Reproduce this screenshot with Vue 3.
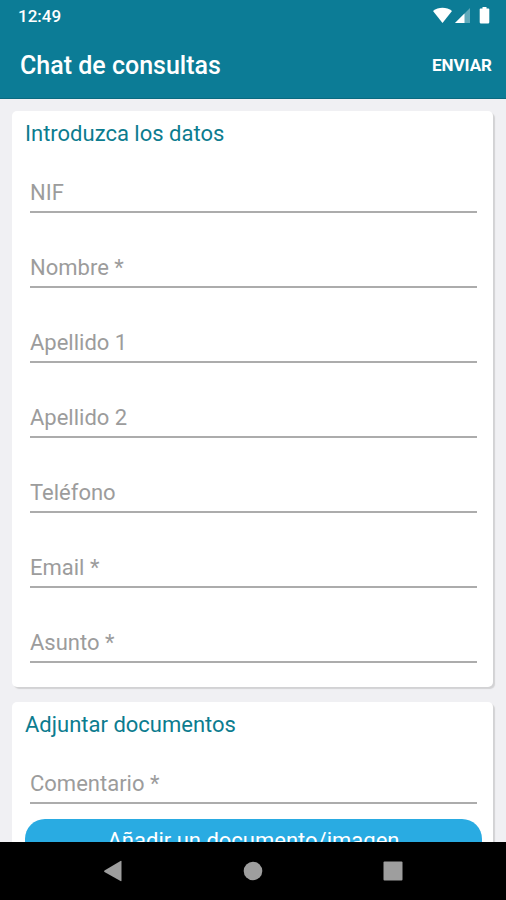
<script setup>
import { reactive } from 'vue'

const fields = [
  { id: 'nif', label: 'NIF', type: 'text' },
  { id: 'nombre', label: 'Nombre *', type: 'text' },
  { id: 'apellido1', label: 'Apellido 1', type: 'text' },
  { id: 'apellido2', label: 'Apellido 2', type: 'text' },
  { id: 'telefono', label: 'Teléfono', type: 'tel' },
  { id: 'email', label: 'Email *', type: 'email' },
  { id: 'asunto', label: 'Asunto *', type: 'text' },
]

const form = reactive({
  nif: '',
  nombre: '',
  apellido1: '',
  apellido2: '',
  telefono: '',
  email: '',
  asunto: '',
  comentario: '',
})
</script>

<template>
  <div class="screen">
    <div class="status">
      <span>12:49</span>
      <svg class="status-icons" width="60" height="20" viewBox="0 0 60 20" aria-hidden="true">
        <path d="M1 5C6.500 .7 14.500 .7 20 5L10.500 17Z" fill="#fff" />
        <path d="M38 2V17H23Z" fill="#fff" fill-opacity=".35" />
        <path d="M32.500 7.500V17H23Z" fill="#fff" />
        <path d="M48.500 2.500h2V1h4v1.500h2q.8 0 .8.800v12.900q0 1.300-1.300 1.300h-7q-1.300 0-1.300-1.300V3.300q0-.8.800-.8Z" fill="#fff" />
      </svg>
    </div>

    <header class="toolbar">
      <h1>Chat de consultas</h1>
      <button type="submit" form="consulta" class="send">ENVIAR</button>
    </header>

    <form id="consulta" class="content" @submit.prevent>
      <section class="card">
        <h2>Introduzca los datos</h2>
        <div class="fields">
          <input
            v-for="field in fields"
            :id="field.id"
            :key="field.id"
            v-model="form[field.id]"
            :type="field.type"
            :placeholder="field.label"
            :aria-label="field.label"
          />
        </div>
      </section>

      <section class="card">
        <h2>Adjuntar documentos</h2>
        <div class="fields">
          <input
            id="comentario"
            v-model="form.comentario"
            type="text"
            placeholder="Comentario *"
            aria-label="Comentario *"
          />
        </div>
        <button type="button" class="attach">Añadir un documento/imagen</button>
      </section>
    </form>

    <nav class="navbar">
      <button type="button" aria-label="Atrás">
        <svg width="24" height="24" viewBox="0 0 24 24"><path d="M20.500 2.500V21.500Q20.500 22.500 19.500 22L3.500 13Q2.500 12.300 3.500 11.600L19.500 2Q20.500 1.500 20.500 2.500Z" fill="#9e9e9e" /></svg>
      </button>
      <button type="button" aria-label="Inicio">
        <svg width="24" height="24" viewBox="0 0 24 24"><circle cx="12" cy="12" r="9.300" fill="#9e9e9e" /></svg>
      </button>
      <button type="button" aria-label="Recientes">
        <svg width="24" height="24" viewBox="0 0 24 24"><rect x="2.500" y="2.500" width="19" height="19" rx="1" fill="#9e9e9e" /></svg>
      </button>
    </nav>
  </div>
</template>

<style>
body {
  margin: 0;
}
</style>

<style scoped>
.screen {
  display: flex;
  flex-direction: column;
  height: 100vh;
  background: #f0f0f3;
  font-family: Roboto, "Liberation Sans", sans-serif;
}

button,
input {
  margin: 0;
  padding: 0;
  border: 0;
  border-radius: 0;
  background: none;
  font: inherit;
}

.status {
  display: flex;
  flex: none;
  align-items: center;
  justify-content: space-between;
  height: 32px;
  padding: 0 14px 0 18px;
  background: #0c7c96;
  color: #fff;
  font-size: 17px;
  font-weight: 500;
}

.status-icons {
  display: block;
}

.toolbar {
  display: flex;
  flex: none;
  align-items: center;
  justify-content: space-between;
  height: 67px;
  padding: 0 14px 0 20px;
  border-bottom: 1px solid #0a6a80;
  box-sizing: border-box;
  background: #0c7c96;
  color: #fff;
}

.toolbar h1 {
  margin: 0;
  font-size: 25px;
  font-weight: 500;
}

.send {
  color: #fff;
  font-size: 17px;
  font-weight: 700;
}

.content {
  display: flex;
  flex: 1;
  flex-direction: column;
  gap: 15px;
  min-height: 0;
  padding: 12px 13px 12px 12px;
  overflow-y: auto;
  scrollbar-width: none;
}

.card {
  flex: none;
  padding: 9px 11px 24px 13px;
  border-radius: 5px;
  background: #fff;
  box-shadow: 2px 2px 1px #d2d2d4;
}

.card h2 {
  margin: 0 0 27px;
  color: #0c7c8f;
  font-size: 22px;
  font-weight: 400;
  line-height: 27px;
}

.fields {
  display: flex;
  flex-direction: column;
  gap: 36px;
  padding: 0 5px;
}

.fields input {
  height: 39px;
  box-sizing: border-box;
  border-bottom: 2px solid #acacac;
  color: #333;
  font-size: 22px;
  outline: none;
}

.fields input::placeholder {
  color: #9c9c9c;
  opacity: 1;
}

.attach {
  display: block;
  width: 100%;
  height: 42px;
  margin-top: 15px;
  border-radius: 20px;
  background: #29abe2;
  color: #fff;
  font-size: 22px;
}

.navbar {
  display: flex;
  flex: none;
  align-items: center;
  justify-content: center;
  gap: 116px;
  height: 58px;
  background: #000;
}

.navbar svg {
  display: block;
}
</style>
